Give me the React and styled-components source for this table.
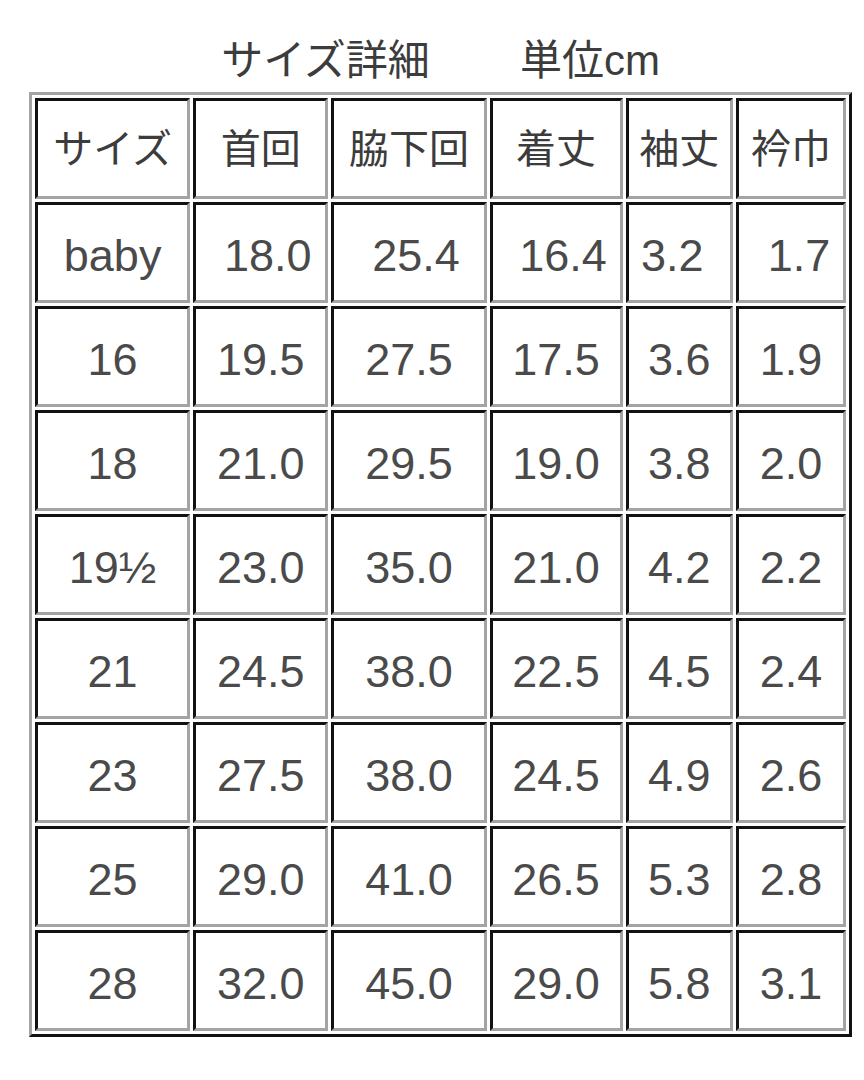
import React from 'react'
import styled, { createGlobalStyle } from 'styled-components'

const GlobalStyle = createGlobalStyle`
  html, body {
    margin: 0;
    padding: 0;
    background: #fff;
  }
  body {
    font-family: "Liberation Sans", "Noto Sans CJK JP", sans-serif;
    color: #444;
  }
`

const Page = styled.div`
  width: 823px;
  padding: 0 0 40px 29px;
`

const Title = styled.h1`
  margin: 0;
  height: 92px;
  display: flex;
  align-items: center;
  justify-content: center;
  padding: 30px 0 0 0;
  box-sizing: border-box;
  font-size: 42px;
  font-weight: 400;
  line-height: 1;
  white-space: pre;
  color: #3c3c3c;
`

const Gap = styled.span`
  display: inline-block;
  width: 90px;
`

const Table = styled.table`
  border-collapse: separate;
  border-spacing: 3px;
  border-style: solid;
  border-width: 3px;
  border-color: #a4a4a4 #111 #111 #a4a4a4;
  table-layout: fixed;
  width: 823px;
`

const Cell = styled.td`
  box-sizing: border-box;
  width: ${p => p.$w}px;
  height: 101px;
  padding: ${p => (p.$head ? 0 : 6)}px ${p => (p.$shift < 0 ? -p.$shift : 0)}px 0 ${p => (p.$shift > 0 ? p.$shift : 0)}px;
  border-style: solid;
  border-width: 3px;
  border-color: #111 #a4a4a4 #a4a4a4 #111;
  text-align: center;
  vertical-align: middle;
  font-size: ${p => (p.$head ? 40 : 45)}px;
  font-weight: 400;
  line-height: 1;
  white-space: nowrap;
  color: ${p => (p.$head ? '#3c3c3c' : '#4a4a4a')};
`

const widths = [155, 135, 155, 133, 107, 110]

const head = ['サイズ', '首回', '脇下回', '着丈', '袖丈', '衿巾']

const rows = [
  [['baby', 0], ['18.0', 14], ['25.4', 14], ['16.4', 14], ['3.2', -14], ['1.7', 16]],
  ['16', '19.5', '27.5', '17.5', '3.6', '1.9'],
  ['18', '21.0', '29.5', '19.0', '3.8', '2.0'],
  ['19½', '23.0', '35.0', '21.0', '4.2', '2.2'],
  ['21', '24.5', '38.0', '22.5', '4.5', '2.4'],
  ['23', '27.5', '38.0', '24.5', '4.9', '2.6'],
  ['25', '29.0', '41.0', '26.5', '5.3', '2.8'],
  ['28', '32.0', '45.0', '29.0', '5.8', '3.1'],
]

export default function App() {
  return (
    <Page>
      <GlobalStyle />
      <Title>サイズ詳細<Gap />単位cm</Title>
      <Table>
        <tbody>
          <tr>
            {head.map((h, i) => (
              <Cell key={h} $head $w={widths[i]} $shift={0}>{h}</Cell>
            ))}
          </tr>
          {rows.map((row, r) => (
            <tr key={r}>
              {row.map((v, i) => {
                const [text, shift] = Array.isArray(v) ? v : [v, 0]
                return (
                  <Cell key={i} $w={widths[i]} $shift={shift}>{text}</Cell>
                )
              })}
            </tr>
          ))}
        </tbody>
      </Table>
    </Page>
  )
}
